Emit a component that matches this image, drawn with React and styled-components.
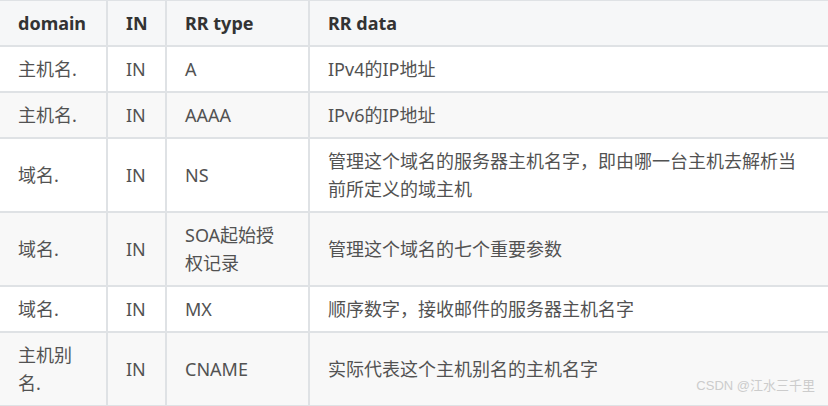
import React from 'react';
import styled, { createGlobalStyle } from 'styled-components';

const rows = [
  ['主机名.', 'IN', 'A', 'IPv4的IP地址'],
  ['主机名.', 'IN', 'AAAA', 'IPv6的IP地址'],
  ['域名.', 'IN', 'NS', '管理这个域名的服务器主机名字，即由哪一台主机去解析当前所定义的域主机'],
  ['域名.', 'IN', 'SOA起始授权记录', '管理这个域名的七个重要参数'],
  ['域名.', 'IN', 'MX', '顺序数字，接收邮件的服务器主机名字'],
  ['主机别名.', 'IN', 'CNAME', '实际代表这个主机别名的主机名字'],
];

export default function App() {
  return (
    <Page>
      <GlobalStyle />
      <Table>
        <HeadCell>domain</HeadCell>
        <HeadCell>IN</HeadCell>
        <HeadCell>RR type</HeadCell>
        <HeadCell>RR data</HeadCell>
        {rows.map((row, index) =>
          row.map((text, col) => (
            <Cell key={index + '-' + col} $even={index % 2 === 1}>
              {text}
            </Cell>
          ))
        )}
      </Table>
      <Watermark>CSDN @江水三千里</Watermark>
    </Page>
  );
}

const GlobalStyle = createGlobalStyle`
  html, body {
    margin: 0;
    padding: 0;
    background: #ffffff;
    overflow: hidden;
  }
  body {
    font-family: "Noto Sans", "Noto Sans CJK SC", sans-serif;
  }
`;

const Page = styled.div`
  position: relative;
  width: 828px;
  height: 406px;
  overflow: hidden;
`;

const Table = styled.div`
  display: grid;
  grid-template-columns: 106px 57px 141px 520px;
  gap: 2px;
  padding: 1px 2px 2px 2px;
  margin-left: -2px;
  width: max-content;
  background: #dfe2e5;
`;

const HeadCell = styled.div`
  padding: 8px 18px;
  font-size: 18px;
  line-height: 28px;
  font-weight: 700;
  color: #333333;
  background: #f6f7f8;
`;

const Cell = styled.div`
  display: flex;
  align-items: center;
  padding: 8px 18px;
  font-size: 18px;
  line-height: 28px;
  color: #525252;
  background: ${(p) => (p.$even ? '#f8f8f8' : '#ffffff')};
  word-break: break-all;
`;

const Watermark = styled.div`
  position: absolute;
  right: 13px;
  bottom: 12px;
  font-family: "Liberation Sans", "Noto Sans CJK SC", sans-serif;
  font-size: 13px;
  color: #cccccc;
`;
